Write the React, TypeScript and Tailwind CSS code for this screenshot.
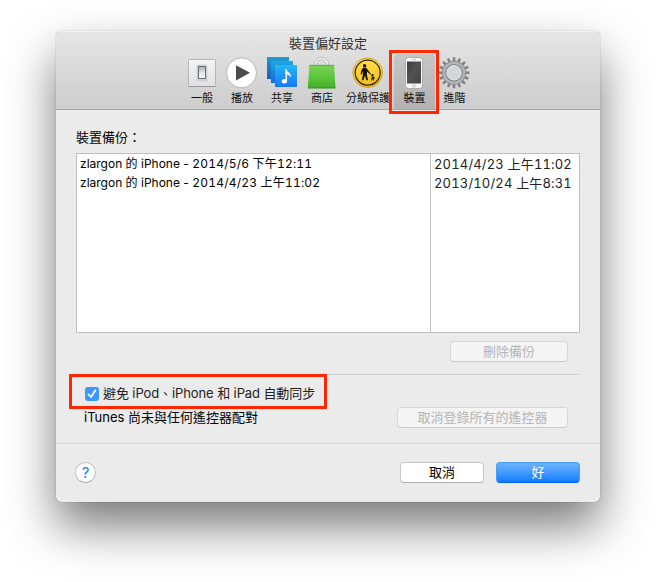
import type { ReactNode } from "react";

const FONT = "font-['Inter','Noto_Sans_CJK_TC',sans-serif]";

function SwitchIcon() {
  return (
    <svg width="32" height="34" viewBox="0 0 32 34">
      <defs>
        <linearGradient id="plate" x1="0" y1="0" x2="0" y2="1">
          <stop offset="0" stopColor="#f3f4f6" />
          <stop offset="1" stopColor="#dfe1e4" />
        </linearGradient>
        <linearGradient id="rocker" x1="0" y1="0" x2="0" y2="1">
          <stop offset="0" stopColor="#a5a7aa" />
          <stop offset="0.55" stopColor="#e6e7e8" />
          <stop offset="1" stopColor="#fafafa" />
        </linearGradient>
      </defs>
      <rect x="2.5" y="3.5" width="27" height="27" rx="1" fill="url(#plate)" stroke="#b4b5b7" />
      <path d="M2.5 30.5h27" stroke="#96979a" />
      <rect x="10.5" y="8.5" width="11" height="17" rx="1.5" fill="#cfd1d4" />
      <rect x="12.5" y="10.5" width="7" height="12" fill="url(#rocker)" stroke="#6b6d70" />
    </svg>
  );
}

function PlayIcon() {
  return (
    <svg width="32" height="34" viewBox="0 0 32 34">
      <circle cx="15.5" cy="16.8" r="15" fill="#fff" stroke="#b5b5b5" />
      <path d="M10 9.2v15.2L24 16.8z" fill="#4c4c4c" />
    </svg>
  );
}

function SharingIcon() {
  return (
    <svg width="32" height="34" viewBox="0 0 32 34">
      <defs>
        <linearGradient id="sq1" x1="0" y1="0" x2="0" y2="1">
          <stop offset="0" stopColor="#219ad3" />
          <stop offset="1" stopColor="#1263c4" />
        </linearGradient>
        <linearGradient id="sq2" x1="0" y1="0" x2="0" y2="1">
          <stop offset="0" stopColor="#20a5df" />
          <stop offset="1" stopColor="#136dd8" />
        </linearGradient>
        <linearGradient id="sq3" x1="0" y1="0" x2="0" y2="1">
          <stop offset="0" stopColor="#25b7fb" />
          <stop offset="1" stopColor="#1678f8" />
        </linearGradient>
      </defs>
      <rect x="1" y="1" width="22" height="22" fill="url(#sq1)" />
      <rect x="5" y="5" width="22" height="22" fill="url(#sq2)" />
      <rect x="9" y="9" width="22" height="22" fill="url(#sq3)" />
      <path d="M20.3 25V13.2" stroke="#fff" strokeWidth="1.5" fill="none" />
      <path d="M19.6 13c1 3 6 3.2 5.2 8.8-.6-2.400-2.600-3.200-5.200-3.800z" fill="#fff" />
      <ellipse cx="18.4" cy="25.2" rx="2.7" ry="2.2" fill="#fff" transform="rotate(-15 18.4 25.2)" />
    </svg>
  );
}

function BagIcon() {
  return (
    <svg width="32" height="34" viewBox="0 0 32 34">
      <defs>
        <linearGradient id="bag" x1="0" y1="0" x2="0" y2="1">
          <stop offset="0" stopColor="#7ad455" />
          <stop offset="0.5" stopColor="#5cc73b" />
          <stop offset="1" stopColor="#45ad2c" />
        </linearGradient>
      </defs>
      <path d="M9.5 13V8.5a6 6 0 0 1 12 0V13" fill="none" stroke="#a3a4a5" strokeWidth="3" />
      <path d="M9.5 13V8.5a6 6 0 0 1 12 0V13" fill="none" stroke="#eeeeef" strokeWidth="1.8" />
      <path d="M3.300 9h24.800l1.400 23.300H1.900z" fill="url(#bag)" />
      <path d="M3.300 9.300h24.800" stroke="#45a32e" strokeWidth="0.7" />
      <path d="M1.900 31.900h27.600" stroke="#389320" strokeWidth="1" />
      <path d="M3.500 27l-1 5M27.500 27l1.400 5" stroke="#44a42e" strokeWidth="0.7" />
    </svg>
  );
}

function ParentalIcon() {
  return (
    <svg width="32" height="34" viewBox="0 0 32 34">
      <defs>
        <linearGradient id="sign" x1="0" y1="0" x2="0" y2="1">
          <stop offset="0" stopColor="#ffdf4d" />
          <stop offset="1" stopColor="#f8bd17" />
        </linearGradient>
      </defs>
      <circle cx="15.7" cy="16.7" r="14.8" fill="url(#sign)" stroke="#c89b26" strokeWidth="0.9" />
      <circle cx="15.7" cy="16.7" r="12.5" fill="none" stroke="#2c260f" strokeWidth="1.2" />
      <circle cx="12.6" cy="9.8" r="1.7" fill="#17140b" />
      <path d="M11.200 11.800h2.900l1.100 1.200 3.700 4.900-.6.600-3.300-3-.1 3.200 1.100 5.600h-1.600l-1.500-4.900-1.400 4.900H9.900l.9-5.600.1-3.600-1.400 3.400-1-.2 1.200-4.700z" fill="#17140b" />
      <circle cx="20.5" cy="19.1" r="1.2" fill="#17140b" />
      <path d="M19.700 20.500h1.600l1.900 1.600-.5.500-1.100-.6.500 2.500h-.9l-.7-1.900-.6 1.900h-.9l.5-2.600z" fill="#17140b" />
    </svg>
  );
}

function PhoneIcon() {
  return (
    <svg width="32" height="34" viewBox="0 0 32 34">
      <defs>
        <linearGradient id="screen" x1="0" y1="0" x2="1" y2="1">
          <stop offset="0" stopColor="#3c3d3e" />
          <stop offset="0.45" stopColor="#515254" />
          <stop offset="1" stopColor="#424346" />
        </linearGradient>
      </defs>
      <rect x="6.5" y="1.5" width="17" height="31" rx="3" fill="#f7f7f7" stroke="#a0a0a0" strokeWidth="0.8" />
      <rect x="8" y="5.5" width="14" height="22" fill="url(#screen)" />
      <path d="M13 3.6h4" stroke="#b4b4b4" strokeWidth="0.8" />
      <circle cx="15" cy="30" r="1.4" fill="#fff" stroke="#aaa" strokeWidth="0.6" />
    </svg>
  );
}

const TEETH = Array.from({ length: 16 }, (_, i) => i * 22.5);

function GearIcon() {
  return (
    <svg width="32" height="34" viewBox="0 0 32 34">
      <g transform="translate(15 16.8)">
        {TEETH.map((angle) => (
          <path key={angle} d="M-1.500-11L-1.200-15.500H1.200L1.500-11z" fill="#808386" transform={`rotate(${angle})`} />
        ))}
        <circle r="9.900" fill="none" stroke="#85888b" strokeWidth="4.400" />
        <circle r="10" fill="none" stroke="#b2b4b6" strokeWidth="2.800" />
        <circle r="8" fill="none" stroke="#7b7e81" strokeWidth="1" />
        <circle r="7.300" fill="#d6d6d6" stroke="#ececec" strokeWidth="0.700" />
      </g>
    </svg>
  );
}

function Tab({ label, icon, size = "w-10", selected = false }: { label: string; icon: ReactNode; size?: string; selected?: boolean }) {
  return (
    <div
      className={`flex h-[55px] shrink-0 flex-col items-center rounded-t-[4px] pt-[2px] ${size} ${
        selected ? "bg-gradient-to-b from-[#c6c6c6] to-[#b2b2b2]" : ""
      }`}
    >
      {icon}
      <span className="whitespace-nowrap text-[11px] leading-4 text-[#111]">{label}</span>
    </div>
  );
}

function Button({ children, look }: { children: ReactNode; look: string }) {
  return (
    <button className={`flex h-[21px] items-center justify-center whitespace-nowrap rounded-[4px] border text-[13px] leading-none ${look}`}>
      {children}
    </button>
  );
}

const DISABLED = "border-[#d6d6d6] border-b-[#c9c9c9] bg-[#f4f4f4] text-[#b5b5b5]";

function BackupName({ date }: { date: string }) {
  return (
    <p className="whitespace-nowrap">
      zlargon 的 iPhone - <span className="tabular-nums tracking-[0.2px]">{date}</span>
    </p>
  );
}

export default function App() {
  return (
    <div className={`relative h-[582px] w-[656px] overflow-hidden bg-white pl-14 pt-[31px] text-black ${FONT}`}>
      <div className="flex h-[471px] w-[544px] flex-col overflow-hidden rounded-[5px] bg-[#ebebeb] shadow-[0_24px_48px_rgba(0,0,0,0.53),0_0_1px_rgba(0,0,0,0.6)]">
        <header className="flex h-[79px] shrink-0 flex-col border-b border-[#a5a5a5] bg-gradient-to-b from-[#e6e6e6] to-[#cdcdcd] shadow-[inset_0_1px_0_#f4f4f4]">
          <h1 className="h-[23px] pt-[2px] text-center text-[13px] leading-5 text-[#333]">裝置偏好設定</h1>
          <nav className="flex pl-[126px]">
            <Tab label="一般" icon={<SwitchIcon />} />
            <Tab label="播放" icon={<PlayIcon />} />
            <Tab label="共享" icon={<SharingIcon />} />
            <Tab label="商店" icon={<BagIcon />} />
            <Tab label="分級保護" icon={<ParentalIcon />} size="w-[52px]" />
            <Tab label="裝置" icon={<PhoneIcon />} size="w-[41px]" selected />
            <Tab label="進階" icon={<GearIcon />} size="w-[39px]" />
          </nav>
        </header>

        <main className="flex h-[334px] shrink-0 flex-col border-b border-[#d3d3d3] px-5">
          <h2 className="mt-[17px] h-[26px] text-[13px] leading-5">裝置備份：</h2>
          <div className="flex h-[180px] border border-[#bfbfbf] bg-white">
            <div className="w-[354px] border-r border-[#c4c4c4] pl-[3px] text-[12px] leading-[19px]">
              <BackupName date="2014/5/6 下午12:11" />
              <BackupName date="2014/4/23 上午11:02" />
            </div>
            <div className="whitespace-nowrap pl-[3px] pt-px text-[13px] leading-[19px] tabular-nums tracking-[0.17px] text-[#222]">
              <p>2014/4/23 上午11:02</p>
              <p>2013/10/24 上午8:31</p>
            </div>
          </div>
          <div className="flex h-[42px] shrink-0 justify-end border-b border-[#d0d0d0] pr-3 pt-2">
            <Button look={`w-[118px] ${DISABLED}`}>刪除備份</Button>
          </div>
          <label className="mt-[9px] flex h-5 items-center gap-[4px] pl-[9px] text-[13px] tracking-[-0.1px] text-[#222]">
            <span className="flex size-[14px] items-center justify-center rounded-[3px] bg-[#3b99fc]">
              <svg width="12" height="12" viewBox="0 0 12 12" fill="none" stroke="#fff" strokeWidth="1.700" strokeLinecap="round" strokeLinejoin="round">
                <path d="M2.5 6.4L5 9l4.400-6.700" />
              </svg>
            </span>
            <span className="whitespace-nowrap">避免 iPod、iPhone 和 iPad 自動同步</span>
          </label>
          <div className="mt-[3px] flex h-[21px] items-center justify-between pl-2 pr-3 text-[13px]">
            <span className="whitespace-nowrap">iTunes 尚未與任何遙控器配對</span>
            <Button look={`w-[171px] ${DISABLED}`}>取消登錄所有的遙控器</Button>
          </div>
        </main>

        <footer className="flex h-[56px] items-center gap-3 px-5">
          <button className="mr-auto -ml-px flex size-[21px] items-center justify-center rounded-full border border-[#c2c2c2] border-b-[#adadad] bg-white text-[15px] leading-none text-[#1580fb]">
            ?
          </button>
          <Button look="w-[84px] border-[#c6c6c6] border-b-[#adadad] bg-white text-black">取消</Button>
          <Button look="w-[84px] border-[#4a9df8] border-b-[#0a62f5] bg-gradient-to-b from-[#6bb3fa] to-[#077dff] text-white">好</Button>
        </footer>
      </div>

      <div className="pointer-events-none absolute left-[389px] top-[50px] h-[64px] w-[50px] border-[3px] border-[#ff2600]" />
      <div className="pointer-events-none absolute left-[69px] top-[374px] h-[35px] w-[258px] border-[3px] border-[#ff2600]" />
    </div>
  );
}
